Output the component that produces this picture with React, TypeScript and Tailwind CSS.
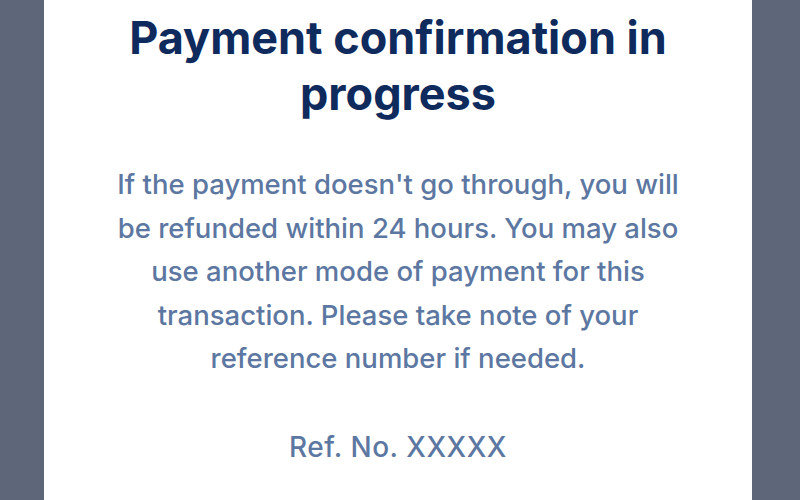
const bodyLines = [
  "If the payment doesn't go through, you will",
  "be refunded within 24 hours. You may also",
  "use another mode of payment for this",
  "transaction. Please take note of your",
  "reference number if needed.",
];

export default function App() {
  return (
    <div className="w-[800px] h-[500px] bg-[#5e6779] flex overflow-hidden">
      <div
        className="ml-[44px] w-[708px] h-full bg-white flex flex-col items-center text-center pt-[10px]"
        style={{ fontFamily: "Inter, 'Noto Sans', sans-serif" }}
      >
        <h1 className="text-[45px] leading-[56px] font-bold text-[#0f2a5c]">
          Payment confirmation in
          <br />
          progress
        </h1>
        <p className="mt-[41px] text-[27.5px] leading-[43.5px] font-medium text-[#5c77a1]">
          {bodyLines.map((line) => (
            <span key={line} className="block">
              {line}
            </span>
          ))}
        </p>
        <p className="mt-[45px] text-[28px] leading-[43px] font-medium tracking-[0.5px] text-[#5c77a1]">
          Ref. No. XXXXX
        </p>
      </div>
    </div>
  );
}
